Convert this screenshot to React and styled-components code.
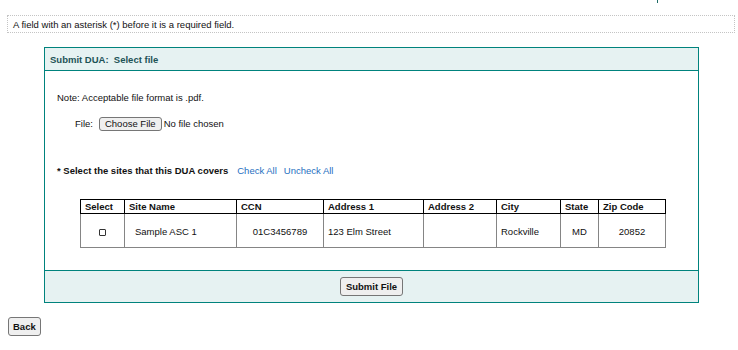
import styled, { createGlobalStyle } from 'styled-components'

const GlobalStyle = createGlobalStyle`
  body {
    margin: 0;
    background: #ffffff;
    font-family: "Liberation Sans", Arial, sans-serif;
    font-size: 9.5px;
    color: #111111;
  }
`

const Page = styled.div`
  width: 738px;
  height: 350px;
  overflow: hidden;
`

const TopStrip = styled.div`
  display: flex;
  justify-content: flex-end;
  height: 3px;
  padding-right: 80px;
`

const Tick = styled.span`
  width: 1px;
  height: 3px;
  background: #1d6b66;
`

const Notice = styled.div`
  box-sizing: border-box;
  height: 18px;
  margin: 12px 3px 0 7px;
  padding-left: 5px;
  border: 1px dotted #c4c4c4;
  display: flex;
  align-items: center;
`

const Panel = styled.div`
  box-sizing: border-box;
  width: 655px;
  margin: 14px 0 0 44px;
  border: 1px solid #00837d;
`

const PanelHeader = styled.div`
  height: 22px;
  padding-left: 5px;
  display: flex;
  align-items: center;
  background: #e6f2f2;
  border-bottom: 1px solid #00837d;
  color: #1d5356;
  font-weight: bold;
`

const PanelBody = styled.div`
  height: 199px;
  padding: 21px 0 0 12px;
  box-sizing: border-box;
`

const Line = styled.div`
  line-height: 12px;
  margin-top: ${p => p.$top || 0}px;
  padding-left: ${p => p.$indent || 0}px;
  display: flex;
  align-items: center;
  font-weight: ${p => (p.$bold ? 'bold' : 'normal')};
`

const Label = styled.span`
  margin-right: 6px;
`

const NativeButton = styled.button`
  box-sizing: border-box;
  height: ${p => p.$h || 19}px;
  padding: 0 ${p => p.$pad || 5}px;
  font-family: "Liberation Sans", Arial, sans-serif;
  font-size: 9.5px;
  font-weight: ${p => (p.$bold ? 'bold' : 'normal')};
  color: #111111;
  background: #efefef;
  border: 1px solid #767676;
  border-radius: 3px;
  line-height: 1;
  cursor: pointer;
`

const FileName = styled.span`
  margin-left: 2px;
`

const LinkText = styled.a`
  color: #1f6fbf;
  font-weight: normal;
  text-decoration: none;
  margin-left: ${p => p.$gap || 0}px;
`

const Table = styled.table`
  margin: 22px 0 0 23px;
  width: 585px;
  border-collapse: collapse;
  table-layout: fixed;
`

const Th = styled.th`
  height: 13px;
  padding: 0 0 0 4px;
  border: 1px solid #000000;
  text-align: left;
  font-weight: bold;
  line-height: 12px;
`

const Td = styled.td`
  height: 31px;
  padding: 2px ${p => (p.$align === 'center' ? 0 : 4)}px 0 ${p => p.$indent ?? 4}px;
  border: 1px solid #858585;
  border-top-color: #000000;
  text-align: ${p => p.$align || 'left'};
  vertical-align: middle;
`

const Check = styled.input`
  appearance: none;
  width: 7px;
  height: 7px;
  margin: 0;
  border: 1px solid #333333;
  border-radius: 1px;
  background: #ffffff;
  vertical-align: middle;
`

const PanelFooter = styled.div`
  height: 31px;
  display: flex;
  align-items: center;
  justify-content: center;
  background: #e6f2f2;
  border-top: 1px solid #00837d;
`

const BackRow = styled.div`
  margin: 14px 0 0 8px;
`

const columns = [
  { title: 'Select', width: 44 },
  { title: 'Site Name', width: 112 },
  { title: 'CCN', width: 87 },
  { title: 'Address 1', width: 100 },
  { title: 'Address 2', width: 73 },
  { title: 'City', width: 64 },
  { title: 'State', width: 38 },
  { title: 'Zip Code', width: 67 },
]

export default function App() {
  return (
    <>
      <GlobalStyle />
      <Page>
        <TopStrip><Tick /></TopStrip>
        <Notice>A field with an asterisk (*) before it is a required field.</Notice>

        <Panel>
          <PanelHeader>Submit DUA:&nbsp; Select file</PanelHeader>
          <PanelBody>
            <Line>Note: Acceptable file format is .pdf.</Line>
            <Line $top={13} $indent={18}>
              <Label>File:</Label>
              <NativeButton type="button" $h={14} $pad={5}>Choose File</NativeButton>
              <FileName>No file chosen</FileName>
            </Line>
            <Line $top={34} $bold>
              * Select the sites that this DUA covers
              <LinkText href="#" $gap={9}>Check All</LinkText>
              <LinkText href="#" $gap={7}>Uncheck All</LinkText>
            </Line>

            <Table>
              <colgroup>
                {columns.map(c => <col key={c.title} style={{ width: c.width }} />)}
              </colgroup>
              <thead>
                <tr>
                  {columns.map(c => <Th key={c.title}>{c.title}</Th>)}
                </tr>
              </thead>
              <tbody>
                <tr>
                  <Td $align="center" $indent={0}><Check type="checkbox" /></Td>
                  <Td $indent={10}>Sample ASC 1</Td>
                  <Td $align="center" $indent={0}>01C3456789</Td>
                  <Td>123 Elm Street</Td>
                  <Td></Td>
                  <Td>Rockville</Td>
                  <Td $align="center" $indent={0}>MD</Td>
                  <Td $align="center" $indent={0}>20852</Td>
                </tr>
              </tbody>
            </Table>
          </PanelBody>
          <PanelFooter>
            <NativeButton type="button" $bold $pad={5}>Submit File</NativeButton>
          </PanelFooter>
        </Panel>

        <BackRow>
          <NativeButton type="button" $bold $pad={4}>Back</NativeButton>
        </BackRow>
      </Page>
    </>
  )
}
